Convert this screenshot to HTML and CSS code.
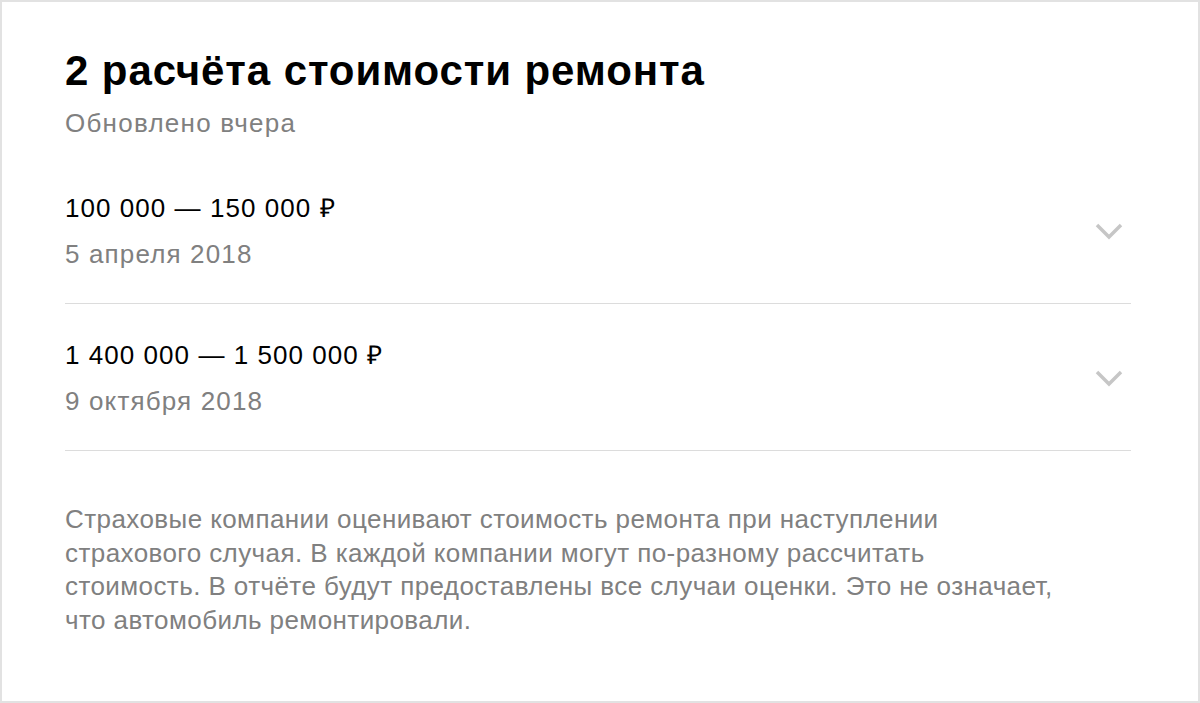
FILE: index.html
```html
<!DOCTYPE html>
<html lang="ru">
<head>
    <meta charset="UTF-8">
    <meta name="viewport" content="width=device-width, initial-scale=1.0">
    <title>Расчёты стоимости ремонта</title>
    <link rel="stylesheet" href="styles.css">
</head>
<body>
    <div class="card">
        <h1 class="card-title">2 расчёта стоимости ремонта</h1>
        <div class="card-subtitle">Обновлено вчера</div>

        <div class="estimates">
            <div class="estimate">
                <div class="estimate-info">
                    <div class="estimate-price">100 000 — 150 000 ₽</div>
                    <div class="estimate-date">5 апреля 2018</div>
                </div>
                <svg class="chevron" width="28" height="17" viewBox="0 0 28 17">
                    <polyline points="2,2 14,14 26,2" />
                </svg>
            </div>
            <div class="estimate">
                <div class="estimate-info">
                    <div class="estimate-price">1 400 000 — 1 500 000 ₽</div>
                    <div class="estimate-date">9 октября 2018</div>
                </div>
                <svg class="chevron" width="28" height="17" viewBox="0 0 28 17">
                    <polyline points="2,2 14,14 26,2" />
                </svg>
            </div>
        </div>

        <p class="note">Страховые компании оценивают стоимость ремонта при наступлении страхового случая. В каждой компании могут по-разному рассчитать стоимость. В отчёте будут предоставлены все случаи оценки. Это не означает, что автомобиль ремонтировали.</p>
    </div>
</body>
</html>
```

FILE: styles.css
```css
/* Reset */
* {
    margin: 0;
    padding: 0;
    box-sizing: border-box;
}

body {
    font-family: "Liberation Sans", Arial, sans-serif;
    background-color: #fff;
    color: #000;
}

/* Card */
.card {
    width: 1200px;
    height: 703px;
    border: 2px solid #e2e2e2;
    padding: 45px 67px 0 63px;
}

.card-title {
    font-size: 42px;
    line-height: 48px;
    font-weight: bold;
    letter-spacing: 0.9px;
}

.card-subtitle {
    margin-top: 11px;
    font-size: 26px;
    line-height: 34px;
    letter-spacing: 1.25px;
    color: #808080;
}

/* Estimates list */
.estimates {
    margin-top: 51px;
}

.estimate {
    display: flex;
    align-items: center;
    justify-content: space-between;
    padding: 0 0 32px 0;
    border-bottom: 1px solid #dcdcdc;
}

.estimate + .estimate {
    padding: 34px 0 32px 0;
}

.estimate-price {
    font-size: 26px;
    line-height: 34px;
    letter-spacing: 1.05px;
}

.estimate-date {
    margin-top: 12px;
    font-size: 26px;
    line-height: 34px;
    letter-spacing: 1.15px;
    color: #808080;
}

.chevron {
    margin-right: 8px;
    fill: none;
    stroke: #c6c6c6;
    stroke-width: 3.5;
}

/* Footer note */
.note {
    margin-top: 52px;
    max-width: 996px;
    font-size: 26px;
    line-height: 33.7px;
    letter-spacing: 0.42px;
    color: #808080;
}
```
